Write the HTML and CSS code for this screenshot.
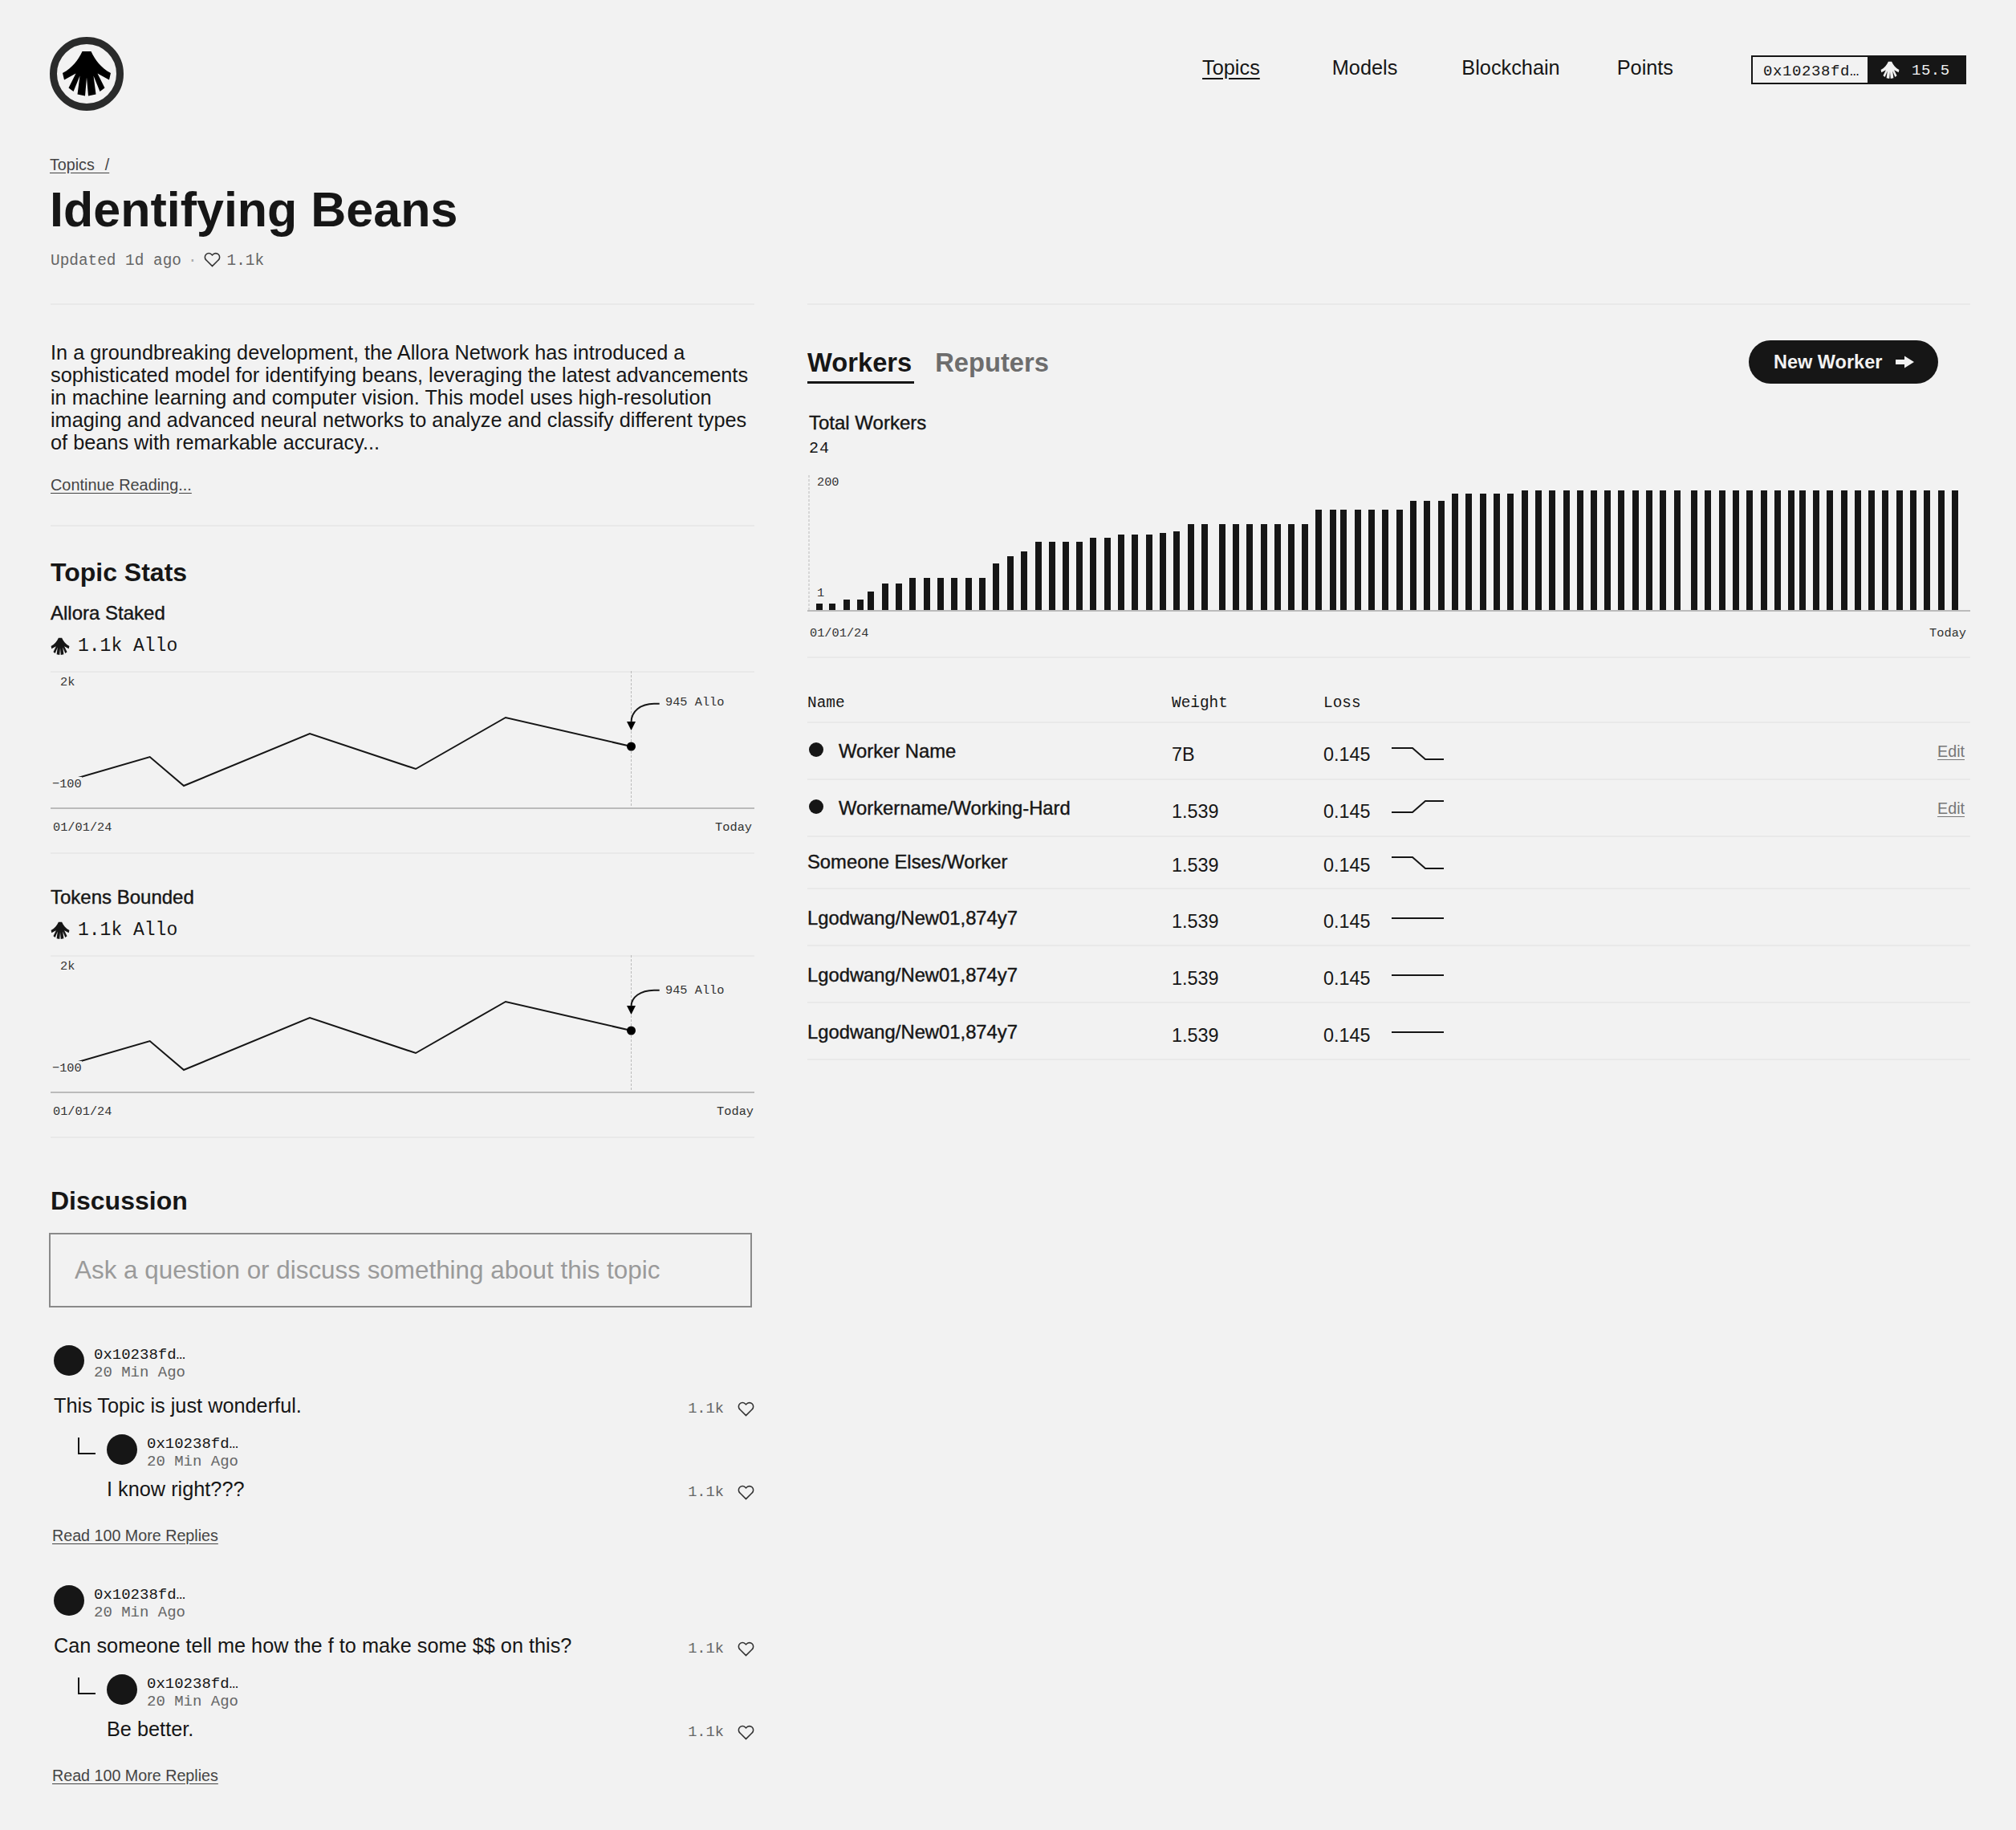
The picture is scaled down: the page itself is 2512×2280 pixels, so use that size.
FILE: index.html
```html
<!DOCTYPE html>
<html>
<head>
    <title>Identifying Beans</title>
    <link rel="stylesheet" href="styles.css">
</head>
<body>
    <svg class="defs" width="0" height="0">
        <symbol id="shell" viewBox="26 28 63 59">
            <path d="M52 29.5H63C68 40 75 50 87.5 56.5L85.5 65L71 57L80 75L74 79.5L66 60L69 83L59.5 85L57.5 62L55.5 85L46 83L49 60L41 79.5L35 75L44 57L29.5 65L27.5 56.5C40 50 47 40 52 29.5Z"/>
        </symbol>
        <symbol id="heart" viewBox="0 0 24 24">
            <path d="M20.84 4.61a5.5 5.5 0 0 0-7.78 0L12 5.67l-1.06-1.06a5.5 5.5 0 0 0-7.78 7.78l1.06 1.06L12 21.23l7.78-7.78 1.06-1.06a5.5 5.5 0 0 0 0-7.78z"/>
        </symbol>
        <symbol id="line-chart" viewBox="0 0 877 171">
            <path class="guide" d="M723.5 0V171"/>
            <path class="trace" d="M3.4 142L123.7 107L166 143L323 78L455 122L567 58L723.5 94"/>
            <circle cx="723.5" cy="94" r="5.5"/>
            <path d="M718 63H729L723.5 74Z"/>
        </symbol>
        <symbol id="spark-down" viewBox="0 0 65 16">
            <path class="spark" d="M0 1H26L42 15H65"/>
        </symbol>
        <symbol id="spark-up" viewBox="0 0 65 16">
            <path class="spark" d="M0 15H26L42 1H65"/>
        </symbol>
        <symbol id="spark-flat" viewBox="0 0 65 16">
            <path class="spark" d="M0 8H65"/>
        </symbol>
    </svg>

    <header class="site-header">
        <a class="logo" href="#">
            <svg width="92" height="92" viewBox="11.5 11.5 92 92">
                <circle class="logo-ring" cx="57.5" cy="57.5" r="41.5"/>
                <path d="M52 29.5H63C68 40 75 50 87.5 56.5L85.5 65L71 57L80 75L74 79.5L66 60L69 83L59.5 85L57.5 62L55.5 85L46 83L49 60L41 79.5L35 75L44 57L29.5 65L27.5 56.5C40 50 47 40 52 29.5Z"/>
            </svg>
        </a>
        <nav class="main-nav">
            <a class="nav-link nav-topics" href="#">Topics</a>
            <a class="nav-link nav-models" href="#">Models</a>
            <a class="nav-link nav-chain" href="#">Blockchain</a>
            <a class="nav-link nav-points" href="#">Points</a>
            <div class="wallet">
                <span class="wallet-address">0x10238fd…</span>
                <span class="wallet-balance"><svg class="icon-shell-sm" width="24" height="23"><use href="#shell"/></svg>15.5</span>
            </div>
        </nav>
    </header>

    <section class="topic-head">
        <a class="crumb" href="#">Topics &nbsp;/</a>
        <h1>Identifying Beans</h1>
        <p class="topic-meta">Updated 1d ago <span class="sep">·</span> <svg class="heart" width="21" height="21"><use href="#heart"/></svg> 1.1k</p>
    </section>

    <main class="columns">
        <div class="col-left">
            <section class="intro">
                <p>In a groundbreaking development, the Allora Network has introduced a sophisticated model for identifying beans, leveraging the latest advancements in machine learning and computer vision. This model uses high-resolution imaging and advanced neural networks to analyze and classify different types of beans with remarkable accuracy...</p>
                <a class="small-link" href="#">Continue Reading...</a>
            </section>

            <section class="stats">
                <h2>Topic Stats</h2>
                <div class="stat first">
                    <h3>Allora Staked</h3>
                    <div class="stat-value"><svg width="24" height="23"><use href="#shell"/></svg>1.1k Allo</div>
                    <div class="line-chart">
                        <svg width="877" height="171">
                            <use href="#line-chart"/>
                            <path class="trace" d="M758.7 40.7H752C735 41 723.5 50 723.5 64"/>
                        </svg>
                        <span class="tick tick-max">2k</span>
                        <span class="tick tick-min">−100</span>
                        <span class="tick tick-note">945 Allo</span>
                    </div>
                    <div class="chart-dates"><span>01/01/24</span><span>Today</span></div>
                </div>
                <div class="stat">
                    <h3>Tokens Bounded</h3>
                    <div class="stat-value"><svg width="24" height="23"><use href="#shell"/></svg>1.1k Allo</div>
                    <div class="line-chart">
                        <svg width="877" height="171">
                            <use href="#line-chart"/>
                            <path class="trace" d="M758.7 43.7H752C735 44 723.5 52 723.5 64"/>
                        </svg>
                        <span class="tick tick-max">2k</span>
                        <span class="tick tick-min">−100</span>
                        <span class="tick tick-note tick-note-low">945 Allo</span>
                    </div>
                    <div class="chart-dates chart-dates-wide"><span>01/01/24</span><span>Today</span></div>
                </div>
            </section>

            <section class="discussion">
                <h2>Discussion</h2>
                <input class="ask" type="text" placeholder="Ask a question or discuss something about this topic">

                <div class="thread">
                    <div class="author"><span class="avatar"></span><div class="author-text"><div class="addr">0x10238fd…</div><div class="when">20 Min Ago</div></div></div>
                    <div class="comment-row"><p>This Topic is just wonderful.</p><div class="likes">1.1k<svg class="heart" width="21" height="21"><use href="#heart"/></svg></div></div>
                    <div class="reply">
                        <div class="author"><span class="avatar"></span><div class="author-text"><div class="addr">0x10238fd…</div><div class="when">20 Min Ago</div></div></div>
                        <div class="comment-row"><p>I know right???</p><div class="likes">1.1k<svg class="heart" width="21" height="21"><use href="#heart"/></svg></div></div>
                    </div>
                    <a class="small-link" href="#">Read 100 More Replies</a>
                </div>

                <div class="thread">
                    <div class="author"><span class="avatar"></span><div class="author-text"><div class="addr">0x10238fd…</div><div class="when">20 Min Ago</div></div></div>
                    <div class="comment-row"><p>Can someone tell me how the f to make some $$ on this?</p><div class="likes">1.1k<svg class="heart" width="21" height="21"><use href="#heart"/></svg></div></div>
                    <div class="reply">
                        <div class="author"><span class="avatar"></span><div class="author-text"><div class="addr">0x10238fd…</div><div class="when">20 Min Ago</div></div></div>
                        <div class="comment-row"><p>Be better.</p><div class="likes">1.1k<svg class="heart" width="21" height="21"><use href="#heart"/></svg></div></div>
                    </div>
                    <a class="small-link" href="#">Read 100 More Replies</a>
                </div>
            </section>
        </div>

        <div class="col-right">
            <div class="tabs-row">
                <div class="tabs">
                    <a class="tab active" href="#">Workers</a>
                    <a class="tab" href="#">Reputers</a>
                </div>
                <a class="new-worker" href="#">New Worker
                    <svg width="23" height="16" viewBox="0 0 23 16"><path d="M0 5H11V0.5L23 8L11 15.5V11H0Z"/></svg>
                </a>
            </div>

            <h3 class="total-title">Total Workers</h3>
            <div class="total-value">24</div>
            <div class="bar-chart">
                <svg width="1449" height="168" viewBox="0 0 1449 168">
                    <path class="guide" d="M2 0V168"/>
                    <path class="bars" d="M14.5 168v-8M31.4 168v-8M48.7 168v-13M66 168v-13M79.3 168v-23M96.7 168v-33M114 168v-33M131.4 168v-40M148.7 168v-40M166 168v-40M183.4 168v-40M200.8 168v-40M218 168v-40M235.4 168v-58M252.8 168v-67M270 168v-73M287.5 168v-85M304.7 168v-85M322 168v-85M339 168v-85M356.4 168v-90M373.7 168v-90M391 168v-94M408.4 168v-94M425.8 168v-94M443 168v-96M460.4 168v-98M477.8 168v-107M495 168v-107M516.6 168v-107M534 168v-107M551 168v-107M568.6 168v-107M586 168v-107M602.7 168v-107M620 168v-107M637.3 168v-125M654.7 168v-125M668.3 168v-125M685.7 168v-125M703 168v-125M720.3 168v-125M737.7 168v-125M755 168v-136M772.3 168v-136M789.7 168v-136M807 168v-145M824.3 168v-145M841.7 168v-145M859 168v-145M876.3 168v-145M893.7 168v-149M911 168v-149M928.3 168v-149M945.7 168v-149M963 168v-149M980.3 168v-149M997 168v-149M1014 168v-149M1031.6 168v-149M1049 168v-149M1066 168v-149M1083.7 168v-149M1105 168v-149M1122 168v-149M1139.8 168v-149M1157 168v-149M1174 168v-149M1191.6 168v-149M1208.7 168v-149M1226 168v-149M1239.8 168v-149M1257 168v-149M1274 168v-149M1291.6 168v-149M1308.7 168v-149M1326 168v-149M1343 168v-149M1360.5 168v-149M1378 168v-149M1395 168v-149M1412.6 168v-149M1430 168v-149"/>
                </svg>
                <span class="tick bar-max">200</span>
                <span class="tick bar-min">1</span>
            </div>
            <div class="chart-dates bar-dates"><span>01/01/24</span><span>Today</span></div>

            <div class="workers">
                <div class="worker-row worker-head"><span>Name</span><span>Weight</span><span>Loss</span></div>
                <div class="worker-row">
                    <span class="worker-name"><i class="dot"></i>Worker Name</span>
                    <span class="worker-num">7B</span>
                    <span class="worker-num worker-loss">0.145<svg width="65" height="16"><use href="#spark-down"/></svg></span>
                    <a class="edit" href="#">Edit</a>
                </div>
                <div class="worker-row">
                    <span class="worker-name"><i class="dot"></i>Workername/Working-Hard</span>
                    <span class="worker-num">1.539</span>
                    <span class="worker-num worker-loss">0.145<svg class="spark-high" width="65" height="16"><use href="#spark-up"/></svg></span>
                    <a class="edit" href="#">Edit</a>
                </div>
                <div class="worker-row worker-short">
                    <span class="worker-name">Someone Elses/Worker</span>
                    <span class="worker-num">1.539</span>
                    <span class="worker-num worker-loss">0.145<svg class="spark-mid" width="65" height="16"><use href="#spark-down"/></svg></span>
                </div>
                <div class="worker-row worker-flat">
                    <span class="worker-name">Lgodwang/New01,874y7</span>
                    <span class="worker-num">1.539</span>
                    <span class="worker-num worker-loss">0.145<svg width="65" height="16"><use href="#spark-flat"/></svg></span>
                </div>
                <div class="worker-row worker-flat">
                    <span class="worker-name">Lgodwang/New01,874y7</span>
                    <span class="worker-num">1.539</span>
                    <span class="worker-num worker-loss">0.145<svg width="65" height="16"><use href="#spark-flat"/></svg></span>
                </div>
                <div class="worker-row worker-flat">
                    <span class="worker-name">Lgodwang/New01,874y7</span>
                    <span class="worker-num">1.539</span>
                    <span class="worker-num worker-loss">0.145<svg width="65" height="16"><use href="#spark-flat"/></svg></span>
                </div>
            </div>
        </div>
    </main>
</body>
</html>
```

FILE: styles.css
```css
* {
    box-sizing: border-box;
}

body {
    margin: 0;
    padding: 0 57px 0 62px;
    background-color: #f2f2f2;
    color: #161616;
    font-family: "Liberation Sans", Arial, sans-serif;
    font-size: 25.3px;
}

a {
    color: inherit;
    text-decoration: none;
}

h1, h2, h3, p {
    margin: 0;
}

.defs {
    position: absolute;
}

.site-header {
    display: flex;
    justify-content: space-between;
    padding: 46px 5px 0 0;
}

.logo {
    display: block;
    height: 92px;
}

.logo-ring {
    fill: none;
    stroke: #2a2b2b;
    stroke-width: 9;
}

.main-nav {
    display: flex;
    align-items: flex-start;
}

.nav-link {
    font-size: 25.3px;
    line-height: 30px;
    margin-top: 23px;
}

.nav-topics {
    text-decoration: underline;
    text-underline-offset: 4px;
    margin-right: 90px;
}

.nav-models {
    margin-right: 80px;
}

.nav-chain {
    margin-right: 71px;
}

.nav-points {
    margin-right: 97px;
}

.wallet {
    display: flex;
    height: 36px;
    margin-top: 23px;
    border: 2px solid #161616;
    font-family: "Liberation Mono", monospace;
    font-size: 19px;
    line-height: 37px;
}

.wallet-address {
    width: 143px;
    padding-left: 13px;
    letter-spacing: 0.6px;
}

.wallet-balance {
    display: flex;
    align-items: center;
    width: 121px;
    padding: 2px 0 0 16px;
    background-color: #161616;
    color: #f2f2f2;
    letter-spacing: 0.5px;
}

.icon-shell-sm {
    margin: -2px 15px 0 0;
    fill: #f2f2f2;
}

.topic-head {
    margin-top: 55px;
}

.crumb {
    display: block;
    width: fit-content;
    font-size: 19.7px;
    line-height: 24px;
    word-spacing: 1px;
    color: #444;
    text-decoration: underline;
    text-underline-offset: 3px;
}

h1 {
    font-size: 61px;
    line-height: 70px;
    margin-top: 9px;
}

.topic-meta {
    display: flex;
    align-items: center;
    gap: 8px;
    height: 24px;
    margin: 17px 0 0 1px;
    font-family: "Liberation Mono", monospace;
    font-size: 19.4px;
    color: #666;
}

.sep {
    color: #aaa;
}

.heart {
    fill: none;
    stroke: #333;
    stroke-width: 1.8;
    flex: none;
}

.topic-meta .heart {
    margin-top: -4px;
}

.columns {
    display: flex;
    align-items: flex-start;
    gap: 66px;
    margin-top: 41px;
}

.col-left {
    flex: none;
    width: 878px;
}

.col-right {
    flex: 1;
    border-top: 2px solid #e9e9e9;
}

.intro {
    margin-left: 1px;
    padding: 45px 0 38px;
    border-top: 2px solid #e9e9e9;
    border-bottom: 2px solid #e9e9e9;
}

.intro p {
    font-size: 25.3px;
    line-height: 28px;
}

.small-link {
    display: block;
    width: fit-content;
    font-size: 19.7px;
    line-height: 24px;
    color: #444;
    text-decoration: underline;
    text-underline-offset: 3px;
}

.intro .small-link {
    margin-top: 27px;
    font-size: 19.9px;
}

.stats {
    margin-left: 1px;
}

h2 {
    font-size: 32px;
    line-height: 38px;
}

.stats h2 {
    margin-top: 38px;
}

.stat {
    padding-top: 40px;
    padding-bottom: 21px;
    border-bottom: 2px solid #e9e9e9;
}

.stat.first {
    padding-top: 18px;
}

h3 {
    font-size: 24px;
    line-height: 28px;
    font-weight: normal;
    -webkit-text-stroke: 0.4px #161616;
}

.stat-value {
    display: flex;
    align-items: center;
    gap: 10px;
    height: 28px;
    margin-top: 13px;
    font-family: "Liberation Mono", monospace;
    font-size: 23px;
}

.stat-value svg {
    fill: #161616;
}

.line-chart {
    position: relative;
    height: 172px;
    margin-top: 17px;
    border-top: 2px solid #e9e9e9;
    border-bottom: 2px solid #bbb;
}

.line-chart svg {
    display: block;
    margin-top: -2px;
}

.guide {
    fill: none;
    stroke: #bbb;
    stroke-width: 1;
    stroke-dasharray: 3 2;
}

.trace {
    fill: none;
    stroke: #161616;
    stroke-width: 2;
}

.tick {
    position: absolute;
    font-family: "Liberation Mono", monospace;
    font-size: 15.3px;
    line-height: 18px;
    color: #333;
}

.tick-max {
    left: 12px;
    top: 3px;
}

.tick-min {
    left: 2px;
    top: 130px;
    background-color: #f2f2f2;
}

.tick-note {
    left: 766px;
    top: 28px;
}

.tick-note-low {
    top: 33px;
}

.chart-dates {
    display: flex;
    justify-content: space-between;
    margin-top: 13px;
    padding: 0 3px;
    font-family: "Liberation Mono", monospace;
    font-size: 15.3px;
    line-height: 20px;
    color: #333;
}

.chart-dates-wide {
    padding-right: 1px;
}

.discussion {
    margin-left: 1px;
}

.discussion h2 {
    margin-top: 59px;
}

.ask {
    display: block;
    width: 876px;
    height: 93px;
    margin: 21px 0 0 -2px;
    padding: 0 0 0 30px;
    border: 2px solid #8a8a8a;
    background: none;
    outline: none;
    font-family: "Liberation Sans", Arial, sans-serif;
    font-size: 31.4px;
    color: #161616;
}

.ask::placeholder {
    color: #9a9a9a;
    opacity: 1;
}

.thread {
    margin-top: 47px;
    padding-left: 4px;
}

.thread + .thread {
    margin-top: 50px;
}

.author {
    display: flex;
    align-items: flex-start;
    gap: 12px;
}

.author-text {
    margin-top: 1px;
}

.avatar {
    flex: none;
    width: 38px;
    height: 38px;
    border-radius: 50%;
    background-color: #161616;
}

.addr,
.when {
    font-family: "Liberation Mono", monospace;
    font-size: 19px;
    line-height: 22px;
}

.when {
    color: #666;
}

.comment-row {
    display: flex;
    justify-content: space-between;
    align-items: flex-start;
    margin-top: 16px;
}

.comment-row p {
    font-size: 25.3px;
    line-height: 28px;
}

.likes {
    display: flex;
    align-items: center;
    gap: 17px;
    margin-top: 6px;
    font-family: "Liberation Mono", monospace;
    font-size: 18.7px;
    line-height: 24px;
    color: #666;
}

.reply {
    position: relative;
    margin-top: 20px;
    padding-left: 66px;
}

.reply::before {
    content: "";
    position: absolute;
    left: 30px;
    top: 4px;
    width: 20px;
    height: 19px;
    border-left: 2px solid #161616;
    border-bottom: 2px solid #161616;
}

.reply .comment-row {
    margin-top: 9px;
}

.thread .small-link {
    margin: 30px 0 0 -2px;
}

.tabs-row {
    display: flex;
    justify-content: space-between;
    height: 54px;
    margin-top: 44px;
    padding-right: 40px;
}

.tabs {
    display: flex;
    gap: 26px;
    align-items: flex-start;
    margin-top: 9px;
}

.tab {
    font-size: 32.7px;
    font-weight: bold;
    line-height: 38px;
    padding: 0 3px 4px 0;
    color: #6d6d6d;
}

.tab.active {
    color: #161616;
    border-bottom: 3px solid #161616;
}

.new-worker {
    display: flex;
    align-items: center;
    gap: 17px;
    height: 54px;
    width: 236px;
    padding-left: 31px;
    border-radius: 27px;
    background-color: #161616;
    color: #f2f2f2;
    font-size: 23.5px;
    font-weight: bold;
}

.new-worker svg {
    fill: #f2f2f2;
}

.total-title {
    margin: 35px 0 0 2px;
}

.total-value {
    margin: 6px 0 0 2px;
    font-family: "Liberation Mono", monospace;
    font-size: 20px;
    line-height: 24px;
    letter-spacing: 1px;
}

.bar-chart {
    position: relative;
    height: 170px;
    margin-top: 21px;
    border-bottom: 2px solid #bbb;
}

.bar-chart svg {
    display: block;
}

.bars {
    fill: none;
    stroke: #161616;
    stroke-width: 8;
    shape-rendering: crispEdges;
}

.bar-max {
    left: 12px;
    top: 0;
}

.bar-min {
    left: 12px;
    top: 138px;
}

.bar-dates {
    margin-top: 17px;
    padding: 0 5px 0 3px;
}

.workers {
    margin-top: 19px;
    border-top: 2px solid #e9e9e9;
}

.worker-row {
    display: grid;
    grid-template-columns: 454px 189px 1fr auto;
    height: 71px;
    padding: 21px 7px 0 0;
    border-bottom: 2px solid #e9e9e9;
}

.worker-head {
    height: 81px;
    padding-top: 44px;
    font-family: "Liberation Mono", monospace;
    font-size: 19.4px;
    line-height: 24px;
}

.worker-short {
    height: 65px;
    padding-top: 17px;
}

.worker-flat {
    padding-top: 22px;
}

.worker-name {
    display: flex;
    align-items: center;
    gap: 19px;
    height: 28px;
    font-size: 23.8px;
    -webkit-text-stroke: 0.4px #161616;
}

.dot {
    width: 18px;
    height: 18px;
    margin-left: 2px;
    margin-top: -4px;
    border-radius: 50%;
    background-color: #161616;
}

.worker-num {
    height: 28px;
    margin-top: 4px;
    font-size: 23.4px;
    line-height: 28px;
}

.worker-loss {
    display: flex;
    align-items: center;
    gap: 26px;
}

.worker-loss svg {
    margin-top: -2px;
}

.worker-loss .spark-high {
    margin-top: -12px;
}

.worker-loss .spark-mid {
    margin-top: -7px;
}

.worker-flat .worker-loss svg {
    margin-top: -9px;
}

.spark {
    fill: none;
    stroke: #161616;
    stroke-width: 2;
}

.edit {
    margin-top: 2px;
    font-size: 19.7px;
    line-height: 24px;
    color: #777;
    text-decoration: underline;
    text-underline-offset: 3px;
}
```
